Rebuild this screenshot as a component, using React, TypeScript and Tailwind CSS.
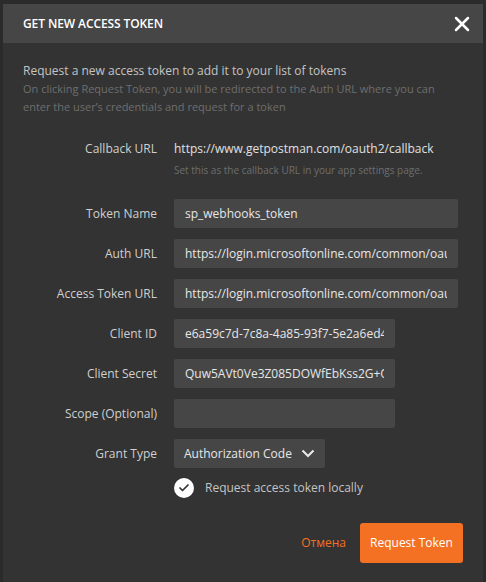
import { X, Check } from "lucide-react";

const font = { fontFamily: '"Open Sans", "Noto Sans", sans-serif' };

type Field = { label: string; value: string; width: string };

const fields: Field[] = [
  { label: "Token Name", value: "sp_webhooks_token", width: "w-[284px]" },
  { label: "Auth URL", value: "https://login.microsoftonline.com/common/oauth2/authorize", width: "w-[284px]" },
  { label: "Access Token URL", value: "https://login.microsoftonline.com/common/oauth2/token", width: "w-[284px]" },
  { label: "Client ID", value: "e6a59c7d-7c8a-4a85-93f7-5e2a6ed4c1b0", width: "w-[221px]" },
  { label: "Client Secret", value: "Quw5AVt0Ve3Z085DOWfEbKss2G+QpXz1", width: "w-[221px]" },
  { label: "Scope (Optional)", value: "", width: "w-[221px]" },
];

export default function App() {
  return (
    <div className="h-[582px] overflow-hidden bg-[#2b2b2b] pl-[3px] pr-[3px] pt-[4px]" style={font}>
      <div className="h-[600px] w-[480px] bg-[#333333]">
        <div className="flex h-[39px] items-center justify-between bg-[#464646] pl-5 pr-[9px]">
          <h1 className="text-[12px] font-semibold tracking-[-0.1px] text-white">GET NEW ACCESS TOKEN</h1>
          <X className="h-6 w-6 text-white" strokeWidth={2.5} />
        </div>

        <div className="px-5 pt-[19px]">
          <p className="text-[12px] leading-[18px] text-[#c4c4c4]">
            Request a new access token to add it to your list of tokens
          </p>
          <p className="text-[11px] leading-[18px] text-[#6e6e6e]">
            On clicking Request Token, you will be redirected to the Auth URL where you can enter the user’s credentials
            and request for a token
          </p>

          <div className="mt-6 grid grid-cols-[134px_284px] gap-x-[17px]">
            <div className="text-right text-[12px] leading-[18px] text-[#cfcfcf]">Callback URL</div>
            <div>
              <div className="text-[12px] leading-[18px] text-[#e0e0e0]">https://www.getpostman.com/oauth2/callback</div>
              <div className="mt-[3px] text-[10px] leading-[18px] text-[#6e6e6e]">
                Set this as the callback URL in your app settings page.
              </div>
            </div>
          </div>

          <div className="mt-5 flex flex-col gap-[11px]">
            {fields.map((f) => (
              <div key={f.label} className="grid grid-cols-[134px_284px] items-center gap-x-[17px]">
                <label className="text-right text-[12px] text-[#cfcfcf]">{f.label}</label>
                <input
                  readOnly
                  value={f.value}
                  className={`${f.width} h-[29px] rounded-[2px] bg-[#464646] px-[11px] text-[12px] text-[#e6e6e6] outline-none`}
                  style={font}
                />
              </div>
            ))}
            <div className="grid grid-cols-[134px_284px] items-center gap-x-[17px]">
              <label className="text-right text-[12px] text-[#cfcfcf]">Grant Type</label>
              <div className="flex h-[29px] w-[151px] items-center justify-between rounded-[2px] bg-[#464646] pl-[10px] pr-[10px] text-[12px] text-[#e6e6e6]">
                <span>Authorization Code</span>
                <svg width="14" height="9" viewBox="0 0 14 9" className="text-[#e6e6e6]">
                  <polyline points="1.5,1.5 7,7 12.5,1.5" fill="none" stroke="currentColor" strokeWidth="2.2" />
                </svg>
              </div>
            </div>
          </div>

          <div className="mt-[10px] grid grid-cols-[134px_284px] gap-x-[17px]">
            <div />
            <div className="flex items-center gap-[11px]">
              <span className="flex h-[20px] w-[20px] items-center justify-center rounded-full bg-white">
                <Check className="h-[12px] w-[12px] text-[#333333]" strokeWidth={3.5} />
              </span>
              <span className="text-[12px] leading-[20px] text-[#c4c4c4]">Request access token locally</span>
            </div>
          </div>

          <div className="mt-[25px] flex items-center justify-end gap-[14px]">
            <button className="text-[12px] text-[#f47023]">Отмена</button>
            <button className="h-[40px] w-[103px] rounded-[3px] bg-[#f47023] text-[12px] text-white">Request Token</button>
          </div>
        </div>
      </div>
    </div>
  );
}
